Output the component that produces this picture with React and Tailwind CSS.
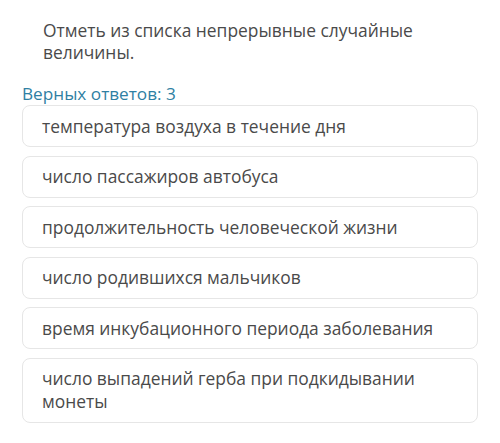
const answers = [
  "температура воздуха в течение дня",
  "число пассажиров автобуса",
  "продолжительность человеческой жизни",
  "число родившихся мальчиков",
  "время инкубационного периода заболевания",
  "число выпадений герба при подкидывании монеты",
];

export default function App() {
  return (
    <div
      className="min-h-[443px] w-[500px] bg-white pt-[19px] pl-[22px] pr-[22px]"
      style={{ fontFamily: '"Open Sans", "Noto Sans", sans-serif' }}
    >
      <p className="pl-[21px] text-[17.4px] leading-[22px] text-[#4a4a4a]">
        Отметь из списка непрерывные случайные величины.
      </p>

      <div className="mt-[20px] text-[17.2px] leading-[22px] text-[#2f7fa3]">Верных ответов: 3</div>

      <div className="flex flex-col gap-[8.5px]">
        {answers.map((answer) => (
          <div
            key={answer}
            className="rounded-[8px] border border-[#e6e6e6] bg-white px-[19px] py-[8.5px] text-[17.4px] leading-[23px] text-[#4a4a4a]"
          >
            {answer}
          </div>
        ))}
      </div>
    </div>
  );
}
